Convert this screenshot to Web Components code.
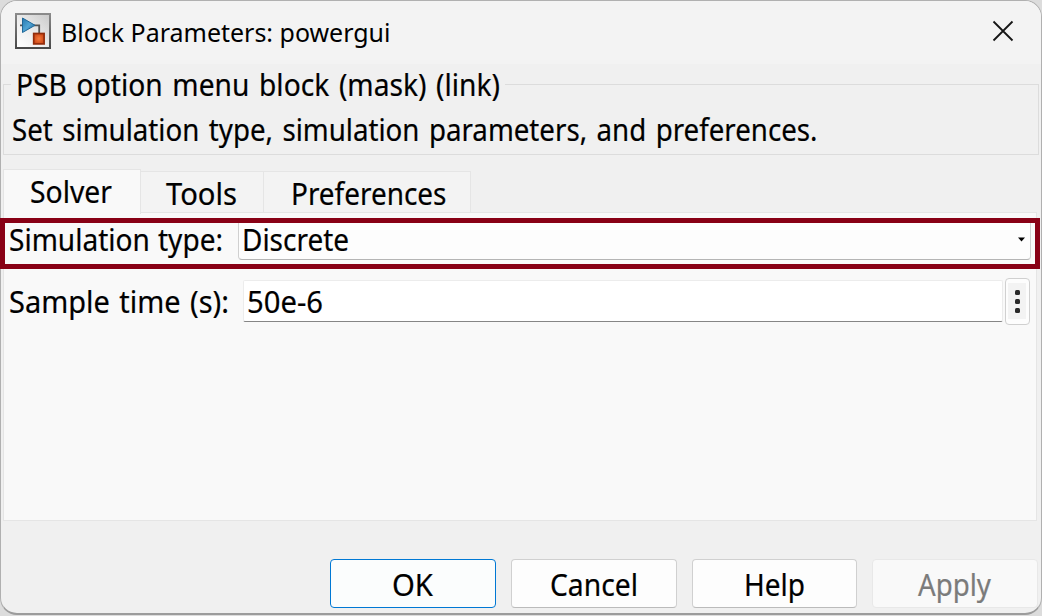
<!DOCTYPE html>
<html lang="en">
<head>
<meta charset="utf-8">
<title>Block Parameters: powergui</title>
<style>
html,body{margin:0;height:100%;overflow:hidden;background:#dcdcdc}
body{font-family:"Noto Sans","Liberation Sans",sans-serif;font-size:30px;color:#000}
</style>
</head>
<body>
<param-dialog></param-dialog>
<script>
const define = (name, markup, ready) => {
  const template = document.createElement('template');
  template.innerHTML = markup;
  customElements.define(name, class extends HTMLElement {
    constructor() {
      super();
      this.attachShadow({mode: 'open'}).append(template.content.cloneNode(true));
    }
    connectedCallback() { if (ready) ready(this); }
  });
};

/* One line of text, condensed so that it takes the given width. */
define('fit-text', `
<style>:host{display:block;white-space:nowrap;line-height:40px;height:40px;flex:none;word-spacing:2.5px;-webkit-text-stroke:.2px currentColor}span{display:inline-block;transform-origin:0 50%}</style>
<span><slot></slot></span>`, el => {
  const w = parseFloat(el.getAttribute('w'));
  const span = el.shadowRoot.querySelector('span');
  const natural = span.getBoundingClientRect().width;
  span.style.transform = 'scaleX(' + w / natural + ')';
  el.style.width = w + 'px';
});

define('title-bar', `
<style>
:host{display:flex;height:63px;background:#f3f3f3;border-radius:16px 16px 0 0;box-sizing:border-box;padding:12px 27px 0 14px;align-items:flex-start;font-size:25.4px}
.icon{width:36px;height:36px;display:block}
fit-text{margin:-1px 0 0 10px;word-spacing:0;-webkit-text-stroke:0}
.close{margin:7px 0 0 auto;width:22px;height:22px;display:block}
</style>
<svg class="icon" viewBox="0 0 36 36">
 <defs>
  <linearGradient id="f" x1="0" y1="0" x2="0" y2="1"><stop offset="0" stop-color="#8c8c8c"/><stop offset="1" stop-color="#484848"/></linearGradient>
  <linearGradient id="g" x1="0" y1="1" x2="1" y2="0"><stop offset="0" stop-color="#fff"/><stop offset=".4" stop-color="#f0f0f0"/><stop offset="1" stop-color="#cbcbcb"/></linearGradient>
  <linearGradient id="b" x1="0" y1="0" x2="1" y2="1"><stop offset="0" stop-color="#2476ad"/><stop offset=".5" stop-color="#4fa4d4"/><stop offset="1" stop-color="#1b5c90"/></linearGradient>
  <radialGradient id="r"><stop offset="0" stop-color="#f47a3c"/><stop offset="1" stop-color="#d04a18"/></radialGradient>
 </defs>
 <rect width="36" height="36" fill="url(#f)"/><rect x="2" y="2" width="32" height="32" fill="url(#g)"/>
 <path d="M5 12.3H8M19 12.3H24.2V20" fill="none" stroke="#555" stroke-width="1.8"/>
 <path d="M7.5 5L20 12.3L7.5 19.5Z" fill="url(#b)" stroke="#1f6798" stroke-width="1"/>
 <rect x="18.7" y="20.5" width="10.4" height="10.4" fill="url(#r)" stroke="#922c0b" stroke-width="1.7"/>
</svg>
<fit-text w="329.5"><slot></slot></fit-text>
<svg class="close" viewBox="0 0 22 22"><path d="M1.5 1.5L20.5 20.5M20.5 1.5L1.5 20.5" stroke="#151515" stroke-width="1.8" fill="none"/></svg>`);

define('group-box', `
<style>
:host{display:block;position:relative;margin:20px 2px 0 2px;height:71px;box-sizing:border-box;border:1px solid #dcdcdc;padding:25px 0 0 8px}
.legend{position:absolute;left:7px;top:-20px;background:#f0f0f0;padding:0 5px}
</style>
<div class="legend"><slot name="legend"></slot></div>
<slot></slot>`);

define('tab-item', `
<style>
:host{display:block;box-sizing:border-box;height:42px;margin-top:2px;border:1px solid #e5e5e5;border-left:0;background:#f3f3f3;padding:2px 0 0 25px}
:host([active]){height:45px;margin:0 0 -1px;border-left:1px solid #e5e5e5;border-bottom:0;background:#f9f9f9;padding:2px 0 0 25.5px;position:relative}
</style><slot></slot>`);

define('tab-strip', `
<style>:host{display:flex;height:43px;margin:14px 0 0 2px}</style><slot></slot>`);

define('tab-panel', `
<style>:host{display:block;box-sizing:border-box;margin:0 4px 0 2px;height:309px;border:1px solid #e5e5e5;background:#f9f9f9;padding:0 5px}</style><slot></slot>`);

define('form-row', `
<style>:host{display:flex;align-items:flex-start}</style><slot></slot>`);

define('combo-box', `
<style>
:host{display:flex;box-sizing:border-box;width:793px;height:40px;border:1px solid #d0d0d0;border-bottom-color:#b5b5b5;border-radius:4px;background:#fdfdfd;padding:0 5px 0 3px;align-items:flex-start;justify-content:space-between}
svg{width:7px;height:5px;margin-top:16px}
</style>
<slot></slot><svg viewBox="0 0 7 5"><path d="M0 0.5H7L3.5 4.5Z"/></svg>`);

define('edit-field', `
<style>:host{display:block;box-sizing:border-box;width:760px;height:42px;border:1px solid #ececec;border-bottom-color:#868686;border-radius:2px;background:#fff;padding:1px 0 0 3px}</style><slot></slot>`);

define('more-button', `
<style>
:host{display:flex;box-sizing:border-box;width:25px;height:47px;border:1px solid #d0d0d0;border-radius:4px;background:#fdfdfd;padding:4px 3px 5px 2px}
div{flex:1;background:#f3f3f3;display:flex;flex-direction:column;align-items:center;justify-content:center;gap:4px}
i{width:5px;height:5px;border-radius:1.5px;background:#2a2a2a}
</style><div><i></i><i></i><i></i></div>`);

define('push-button', `
<style>
:host{display:flex;justify-content:center;box-sizing:border-box;width:166px;height:49px;border:1px solid #d0d0d0;border-bottom-color:#bbb;border-radius:4px;background:#fdfdfd;padding:5px 1px 0 0}
:host([primary]){border-color:#0078d4;background:#fbfdfd}
:host([disabled]){border-color:#e8e8e8;background:#f9f9f9;color:#7b7b7b}
</style><slot></slot>`);

define('button-bar', `
<style>:host{display:flex;justify-content:flex-end;gap:15px;margin:38px 3px 0 0}</style><slot></slot>`);

define('param-dialog', `
<style>
:host{display:block;position:relative;box-sizing:border-box;width:1042px;height:615px;border:1px solid #b0b0b0;border-bottom:2px solid #9c9c9c;border-radius:17px;background:#f0f0f0}
.mark{position:absolute;left:-1px;top:217px;width:1040px;height:51px;box-sizing:border-box;border:5px solid #880015}
.r1{margin-top:7px}.r2{margin-top:18px}
</style>
<title-bar>Block Parameters: powergui</title-bar>
<group-box>
 <fit-text slot="legend" w="484">PSB option menu block (mask) (link)</fit-text>
 <fit-text w="805.5">Set simulation type, simulation parameters, and preferences.</fit-text>
</group-box>
<tab-strip>
 <tab-item active style="width:138px"><fit-text w="82">Solver</fit-text></tab-item>
 <tab-item style="width:123px"><fit-text w="71">Tools</fit-text></tab-item>
 <tab-item style="width:207px;padding-left:26.5px"><fit-text w="155.5">Preferences</fit-text></tab-item>
</tab-strip>
<tab-panel>
 <form-row class="r1"><fit-text w="214" style="word-spacing:1px">Simulation type:</fit-text><combo-box style="margin-left:15px"><fit-text w="107" style="margin-top:-1px">Discrete</fit-text></combo-box></form-row>
 <form-row class="r2"><fit-text w="220" style="margin-top:4px;word-spacing:2px">Sample time (s):</fit-text><edit-field style="margin:2px 0 0 14px"><fit-text w="76">50e-6</fit-text></edit-field><more-button style="margin-left:2px"></more-button></form-row>
</tab-panel>
<button-bar>
 <push-button primary><fit-text w="41">OK</fit-text></push-button>
 <push-button><fit-text w="88">Cancel</fit-text></push-button>
 <push-button style="width:165px"><fit-text w="61">Help</fit-text></push-button>
 <push-button disabled><fit-text w="73">Apply</fit-text></push-button>
</button-bar>
<div class="mark"></div>`);
</script>
</body>
</html>
